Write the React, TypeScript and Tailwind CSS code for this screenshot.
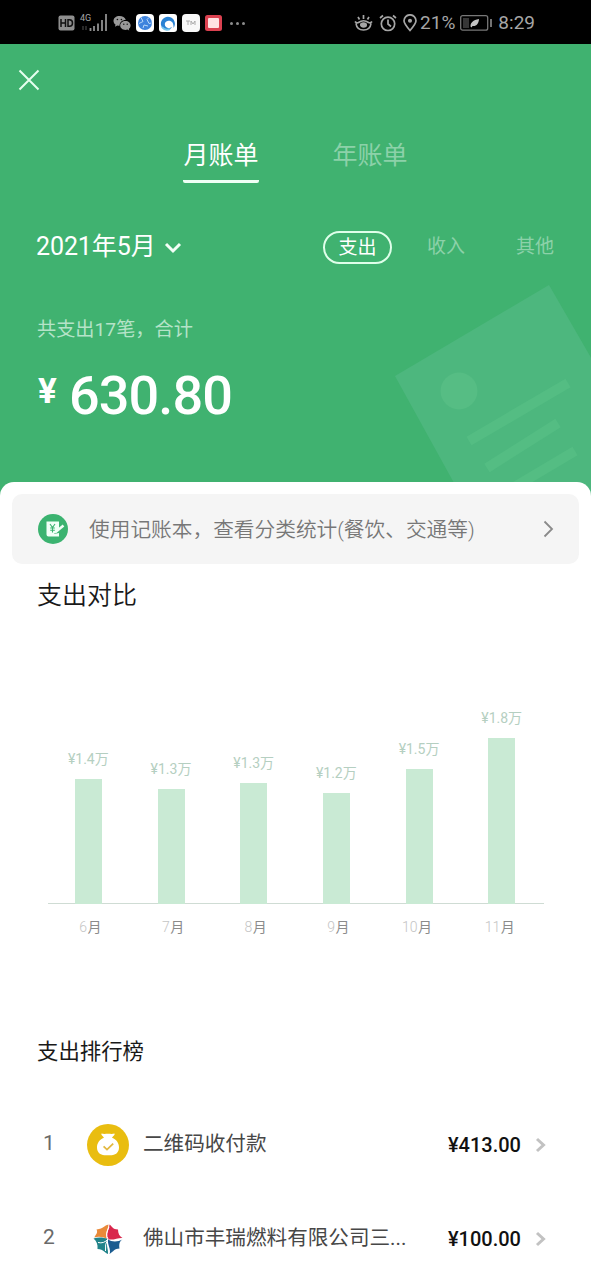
import React from "react";

const bars = [
  { month: "6", label: "¥1.4万", height: 125, shift: "left-[1px]" },
  { month: "7", label: "¥1.3万", height: 115, shift: "left-[1px]" },
  { month: "8", label: "¥1.3万", height: 121, shift: "left-[1px]" },
  { month: "9", label: "¥1.2万", height: 111, shift: "left-[1px]" },
  { month: "10", label: "¥1.5万", height: 135, shift: "-left-[3px]" },
  { month: "11", label: "¥1.8万", height: 166, shift: "-left-[3px]" },
];

const ranking = [
  { rank: 1, name: "二维码收付款", amount: "¥413.00", icon: <MoneyBag /> },
  { rank: 2, name: "佛山市丰瑞燃料有限公司三...", amount: "¥100.00", icon: <Pinwheel /> },
];

function MoneyBag() {
  return (
    <svg viewBox="0 0 42 42" className="size-[42px]">
      <circle cx="21" cy="21" r="21" fill="#e9bd10" />
      <path
        d="M14.6 9.6c2.200.6 4.200.2 6.400.2s4.200.4 6.400-.2c1 1.200-1.400 2.800-2.400 4.200 4.800 1.800 7 5.800 7 9.800 0 5-3.400 7.600-7.400 7.600h-7.200c-4 0-7.400-2.600-7.400-7.600 0-4 2.200-8 7-9.800-1-1.400-3.400-3-2.400-4.200z"
        fill="#fff"
      />
      <path d="M16.600 22.400l3.400 3.200 6.200-6" fill="none" stroke="#e3b840" strokeWidth="1.800" />
    </svg>
  );
}

function Pinwheel() {
  return (
    <svg viewBox="0 0 32 32" className="size-8">
      <path d="M16.500 1.500C12 2.500 12 5.500 4.500 6.500 6.500 10 3 12 2.500 14.500 6 13 11 13.500 15 16c-2.500-5 1-9 1.500-14.500z" fill="#e98a3a" />
      <path d="M17.500 1.500c3 2 3 5 8.500 5 0 4 1.500 7 4.500 8.500-4.500-.5-10 3-15 1C13.500 11.500 17 7.500 17.500 1.500z" fill="#d9274c" />
      <path d="M30.500 16.500C27 18.500 27 22 27.500 25.500c-5 0-6 3-10 5.500 2-4-2.500-10-1.500-15 3.500 3.500 10 3 14.500.5z" fill="#1b5c90" />
      <path d="M1.500 15.500c5-1.500 10.500-1 14 .5-2 5 1 10 .5 15-3.500-1.500-4-4.500-10.500-5 .5-4.500-1-8-4-10.500z" fill="#21848a" />
      <path d="M6 19.500q6 1.500 10-3.500M13.500 28q-1-7 2.500-12M16 16q-3-5 1-12" fill="none" stroke="#fff" strokeWidth="1" />
    </svg>
  );
}

function StatusBar() {
  return (
    <div className="flex h-11 items-center bg-black pt-[2px] text-[#a6a6a6]">
      <div className="ml-[58px] flex items-center">
        <svg viewBox="0 0 17 16" className="h-4 w-[17px]">
          <rect x=".5" y=".5" width="16" height="15" rx="2" fill="#8f8f8f" />
          <path d="M3 4v8M3 8h4.500M7.500 4v8M10 4.700h1.500q3 0 3 3.300t-3 3.300H10z" fill="none" stroke="#111" strokeWidth="1.500" />
        </svg>
        <div className="relative ml-[5px] h-[18px] w-7">
          <span className="absolute -top-[2px] left-0 font-['Roboto'] text-[9px] leading-[12px]">4G</span>
          <svg viewBox="0 0 28 18" className="h-[18px] w-7">
            <path d="M10.500 17v-3M14 17v-5M18 17v-7.500M22 17V6M26 17V0" stroke="#8f8f8f" strokeWidth="1.800" />
            <path d="M3 12v4M6 12v4" stroke="#292929" strokeWidth="2" />
          </svg>
        </div>
        <svg viewBox="0 0 18 16" className="ml-[5px] h-4 w-[18px]">
          <path d="M6.500 1C3 1 .5 3.100.5 5.900c0 1.500.8 2.800 2 3.700L2 11.700l2.300-1.300q1 .3 2.200.3c.2-3.500 3-5.700 6.300-5.600C12 2.500 9.600 1 6.500 1z" fill="#999" />
          <path d="M12.500 6.100c-3 0-5.300 2-5.300 4.400s2.300 4.400 5.300 4.400q1 0 1.800-.3l2 1-.5-1.700c1.100-.8 1.800-2 1.800-3.400 0-2.400-2.200-4.400-5.100-4.400z" fill="#999" />
          <g fill="#111">
            <circle cx="4.400" cy="4.500" r=".8" />
            <circle cx="8.400" cy="4.500" r=".8" />
            <circle cx="10.800" cy="9.200" r=".7" />
            <circle cx="14.200" cy="9.200" r=".7" />
          </g>
        </svg>
        <svg viewBox="0 0 18 18" className="ml-[5px] size-[18px]">
          <rect width="18" height="18" rx="4" fill="#fff" />
          <circle cx="9" cy="9" r="7" fill="#3e83dd" />
          <path d="M5 3.500l2 4-4 2M13 3.500l-2 2 2 4 2.500-.5M7 14l1-3 4 1" fill="none" stroke="#b9d7f8" strokeWidth="1" />
        </svg>
        <svg viewBox="0 0 18 18" className="ml-[5px] size-[18px]">
          <rect width="18" height="18" rx="3" fill="#fff" />
          <path d="M2 11a7 7 0 1 1 12.500 3c.5-5-2-8-6-7-3 .7-3.500 4-1.500 6 1.500 1.500 4 1.500 6 0-2 4-10 4-11-2z" fill="#2882d4" />
          <path d="M3 13q3 4 8 2" fill="none" stroke="#72c5ed" strokeWidth="2" />
        </svg>
        <svg viewBox="0 0 18 18" className="ml-[5px] size-[18px]">
          <rect width="18" height="18" rx="4" fill="#f8f8f8" />
          <path d="M4 7h4M6 7v4M9 11V7l2 3 2-3v4" fill="none" stroke="#aaa" />
        </svg>
        <svg viewBox="0 0 17 16" className="ml-[5px] h-4 w-[17px]">
          <rect width="17" height="16" rx="2.500" fill="#db4150" />
          <rect x="3" y="3" width="11" height="10" rx="1" fill="#ffe1e2" />
        </svg>
        <div className="ml-2 flex gap-[3px]">
          <i className="size-[3px] rounded-full bg-[#8c8c8c]" />
          <i className="size-[3px] rounded-full bg-[#8c8c8c]" />
          <i className="size-[3px] rounded-full bg-[#8c8c8c]" />
        </div>
      </div>
      <div className="mr-14 ml-auto flex items-center font-['Roboto'] text-[19px]">
        {/* eye comfort */}
        <svg viewBox="0 0 19 18" className="h-[18px] w-[19px]" fill="none" stroke="currentColor" strokeWidth="1.700">
          <path d="M1 7.500q1.500 2 3.500 1 5-3.500 10 0 2 1 3.500-1M2 9.500c.5 4 3.500 6.500 7.500 6.500s7-2.500 7.500-6.500M9.500 1v4M4 3l1.500 2.500M15 3l-1.500 2.500" />
          <ellipse cx="9.500" cy="11" rx="2.700" ry="1.900" fill="currentColor" />
        </svg>
        <svg viewBox="0 0 18 18" className="ml-[6px] size-[18px]" fill="none" stroke="currentColor" strokeWidth="1.700">
          <circle cx="9" cy="9.800" r="6.700" />
          <path d="M9 5.500v4.500l3 2.500M1 4l3-2.500M17 4l-3-2.500" />
        </svg>
        <svg viewBox="0 0 14 18" className="ml-[6px] h-[18px] w-3.5" fill="none" stroke="currentColor" strokeWidth="1.700">
          <path d="M7 16.500C3.500 12.500 1 9.500 1 6.800a6 6 0 0 1 12 0c0 2.700-2.500 5.700-6 9.700z" />
          <circle cx="7" cy="6.800" r="1.200" fill="currentColor" />
        </svg>
        <span className="ml-[3px]">21%</span>
        <svg viewBox="0 0 32 16" className="ml-[5px] h-4 w-8">
          <rect x=".7" y=".7" width="27" height="14.500" rx="2" fill="none" stroke="#777" strokeWidth="1.300" />
          <path d="M3 3h6v10H3z" fill="#363636" />
          <path d="M10.500 11.500c0-4 2.500-6.500 8.500-7.500-.2 4.500-2.500 7.500-6.500 7l-1 1.500z" fill="#c4c4c4" />
          <path d="M31 4v8" stroke="#999" strokeWidth="1.500" />
        </svg>
        <span className="ml-[6px]">8:29</span>
      </div>
    </div>
  );
}

function Header() {
  return (
    <header className="relative h-[454px] overflow-hidden bg-[#40b270] text-white">
      {/* receipt watermark */}
      <svg viewBox="0 0 201 220" className="absolute top-[236px] right-0 h-[220px] w-[201px]">
        <path d="M5 96L159 5l120 208L90 250z" fill="#4db77e" />
        <circle cx="69" cy="111" r="18.500" fill="#56bd84" />
        <path d="M79 161l99-58M97 188l71-45M104 219l81-48" stroke="#54bd83" strokeWidth="10" />
      </svg>

      <div className="relative">
        <div className="pt-[25px] pl-[18px]">
          <svg viewBox="0 0 22 22" className="size-[22px]">
            <path d="M1.500 1.500l19 19M20.500 1.500l-19 19" stroke="#e6ffef" strokeWidth="2" />
          </svg>
        </div>
        <nav className="mt-[47px] flex justify-center gap-[74px] text-[25px] leading-[36px]">
          <span className="h-[45px] rounded-b-[2px] border-b-[3px] border-[#effff5]">月账单</span>
          <span className="text-[#8cd1a9]">年账单</span>
        </nav>
        <div className="mt-[47px] flex h-[34px] items-center pl-[36px]">
          <span className="text-[25px] leading-[34px] tracking-[-0.100px]">2021年5月</span>
          <svg viewBox="0 0 18 12" className="mt-[2px] ml-[8px] h-3 w-[18px]">
            <path d="M2 2l7 7 7-7" fill="none" stroke="#f3fff7" strokeWidth="3" />
          </svg>
          <div className="mr-[37px] ml-auto flex items-center text-[19px] leading-[34px] text-[#8cd1a9]">
            <span className="mr-[35px] h-[33px] w-[69px] rounded-full border-2 border-[#dfffea] text-center leading-[30px] text-white">
              支出
            </span>
            <span className="mr-[51px]">收入</span>
            <span>其他</span>
          </div>
        </div>
        <p className="mt-[52px] pl-[37px] text-[19.200px] leading-[28px] text-[#b5e3c8]">共支出17笔，合计</p>
        <div className="mt-[22px] flex pl-[38px] font-['Roboto'] font-medium">
          <span className="mt-[8px] w-[31px] text-[35px] leading-[36px] font-bold">¥</span>
          <span className="text-[54px] leading-[60px] tracking-[-0.900px]">630.80</span>
        </div>
      </div>
    </header>
  );
}

function Chart() {
  return (
    <div className="mt-[76px] ml-[48px] w-[496px]">
      <div className="flex h-[214px] items-end border-b border-[#cfdcd4]">
        {bars.map((bar) => (
          <div key={bar.month} className="relative -left-px flex flex-1 flex-col items-center">
            <span className="mb-[9px] text-[14px] leading-[22px] text-[#b5cfc1]">{bar.label}</span>
            <div className="-mb-[1px] w-[27px] bg-[#c9ead4]" style={{ height: bar.height }} />
          </div>
        ))}
      </div>
      <div className="mt-[13px] flex text-[14px] leading-[20px] text-[#8b8b8b]">
        {bars.map((bar) => (
          <span key={bar.month} className={`relative flex-1 text-center ${bar.shift}`}>
            <span className="mr-[.5px] font-light text-[#c4c4c4]">{bar.month}</span>月
          </span>
        ))}
      </div>
    </div>
  );
}

export default function App() {
  return (
    <div className="h-[1280px] w-[591px] overflow-hidden bg-white font-['Roboto','Noto_Sans_CJK_SC',sans-serif]">
      <StatusBar />
      <Header />
      <main className="relative -mt-4 rounded-t-[14px] bg-white pt-[12px] text-[#191919]">
        <div className="mx-[12px] flex h-[70px] items-center rounded-[10px] bg-[#f5f5f5]">
          <svg viewBox="0 0 30 30" className="ml-[26px] size-[30px]">
            <circle cx="15" cy="15" r="15" fill="#3bb370" />
            <path d="M8.500 7.500h12.500v7l-5 5.500 5-1v3.500H10.500q-2 0-2-2z" fill="#f1fff7" />
            <path d="M17 18.500l8.500-7" stroke="#f1fff7" strokeWidth="2.500" />
            <path d="M12 10l2.500 3.500L17 10M14.500 13.500v5M12.200 14h4.600M12.200 16.300h4.600" fill="none" stroke="#3bb370" strokeWidth="1.100" />
          </svg>
          <span className="mt-[2px] ml-[21px] text-[20.700px] leading-[30px] font-[350] text-[#777]">
            使用记账本，查看分类统计(餐饮、交通等)
          </span>
          <svg viewBox="0 0 11 18" className="mr-[25px] ml-auto h-[18px] w-[11px]">
            <path d="M1.500 1.500L9 9l-7.500 7.500" fill="none" stroke="#8a8a8a" strokeWidth="1.800" />
          </svg>
        </div>

        <h2 className="mt-[14px] pl-[37px] text-[25px] leading-[36px] font-[350]">支出对比</h2>
        <Chart />

        <h3 className="mt-[99px] pl-[37px] text-[21.400px] leading-[32px]">支出排行榜</h3>
        <ul className="mt-[30px]">
          {ranking.map((row) => (
            <li key={row.rank} className="flex h-[94px] items-center pl-[43px]">
              <span className="-mt-[3px] w-[44px] text-[21px] text-[#6a6a6a]">{row.rank}</span>
              <span className="flex w-[42px] justify-center">{row.icon}</span>
              <span className="-mt-[3px] ml-[14px] text-[20.600px] leading-[30px] text-[#474747]">{row.name}</span>
              <span className="ml-auto text-[20px] font-medium text-[#111]">{row.amount}</span>
              <svg viewBox="0 0 12 16" className="mr-[44px] ml-[14px] h-4 w-3">
                <path d="M2 2L8.500 8 2 14" fill="none" stroke="#c2c2c2" strokeWidth="3" />
              </svg>
            </li>
          ))}
        </ul>
      </main>
    </div>
  );
}
